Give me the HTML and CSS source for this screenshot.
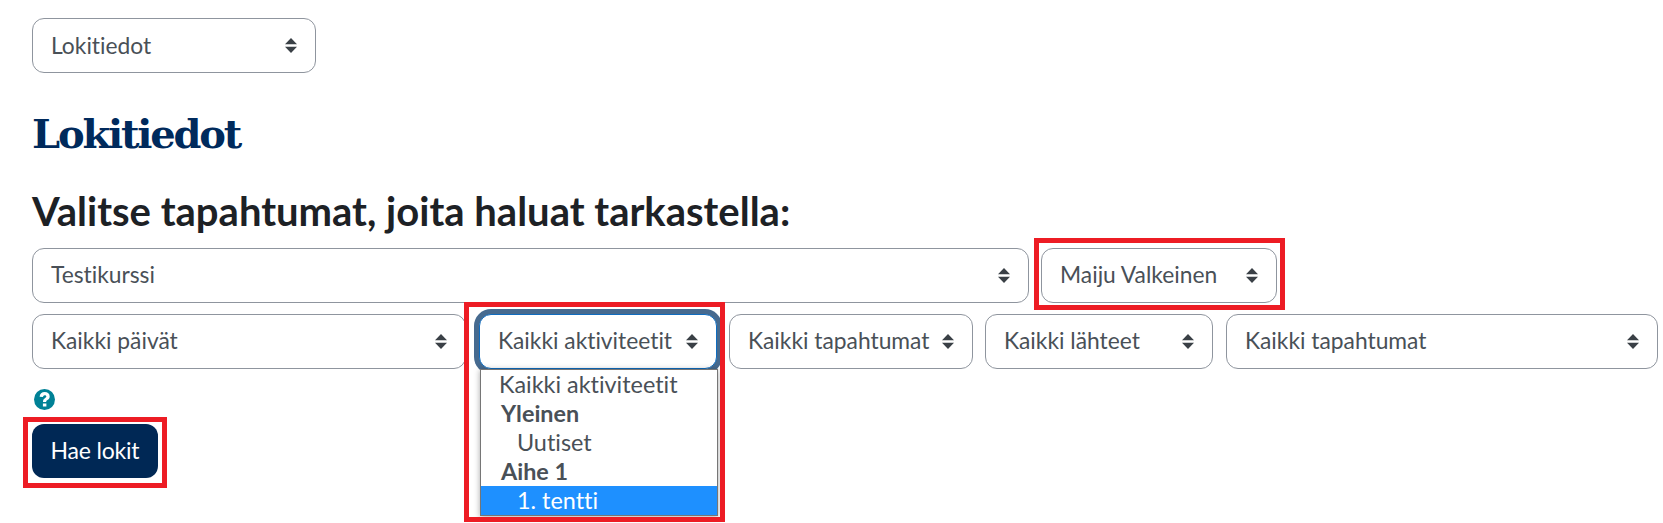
FILE: index.html
```html
<!DOCTYPE html>
<html lang="fi">
<head>
<meta charset="utf-8">
<title>Lokitiedot</title>
<link rel="stylesheet" href="styles.css">
</head>
<body>
<svg class="defs" width="0" height="0" aria-hidden="true"><symbol id="updown" viewBox="0 0 12 15"><path d="M6 0 12 6.3H0Z M0 8.7H12L6 15Z"/></symbol></svg>
<main class="page">
  <div class="sel sel-nav"><span>Lokitiedot</span><svg class="arrows"><use href="#updown"/></svg></div>
  <h2 class="title">Lokitiedot</h2>
  <h3 class="subtitle">Valitse tapahtumat, joita haluat tarkastella:</h3>
  <div class="row row-a">
    <div class="sel w-course"><span>Testikurssi</span><svg class="arrows"><use href="#updown"/></svg></div>
    <div class="sel w-user"><span>Maiju Valkeinen</span><svg class="arrows"><use href="#updown"/></svg><i class="mark mark-user"></i></div>
  </div>
  <div class="row row-b">
    <div class="sel w-date"><span>Kaikki päivät</span><svg class="arrows"><use href="#updown"/></svg></div>
    <div class="sel w-act focused"><span>Kaikki aktiviteetit</span><svg class="arrows"><use href="#updown"/></svg>
      <ul class="menu">
        <li>Kaikki aktiviteetit</li>
        <li class="group">Yleinen</li>
        <li class="child">Uutiset</li>
        <li class="group">Aihe 1</li>
        <li class="child active">1. tentti</li>
      </ul>
      <i class="mark mark-act"></i>
    </div>
    <div class="sel w-event"><span>Kaikki tapahtumat</span><svg class="arrows"><use href="#updown"/></svg></div>
    <div class="sel w-origin"><span>Kaikki lähteet</span><svg class="arrows"><use href="#updown"/></svg></div>
    <div class="sel w-edu"><span>Kaikki tapahtumat</span><svg class="arrows"><use href="#updown"/></svg></div>
  </div>
  <svg class="help" viewBox="0 0 21 21" aria-label="Ohje"><circle cx="10.5" cy="10.5" r="10.5" fill="#008196"/><path d="M5.6 7.8C5.8 4.9 7.8 3.1 10.7 3.1 13.7 3.1 15.7 5 15.7 7.4 15.7 9.3 14.7 10.2 13.4 11.1 12.5 11.7 12.2 12.1 12.2 13.1H9C8.9 11.2 9.5 10.2 10.9 9.2 11.8 8.6 12.3 8.2 12.3 7.6 12.3 6.8 11.6 6.3 10.7 6.3 9.8 6.3 9.2 7 9 8.1Z M8.9 14.4H12.4V17.6H8.9Z" fill="#fff"/></svg>
  <div class="btn">Hae lokit<i class="mark mark-btn"></i></div>
</main>
</body>
</html>
```
FILE: styles.css
```css
* { box-sizing: border-box; }
html, body { margin: 0; padding: 0; background: #fff; }
body { font-family: Lato, "Liberation Sans", sans-serif; font-variant-ligatures: none; overflow: hidden; height: 523px; }
.defs { position: absolute; }
.page { padding: 18px 5px 0 32px; }

.sel {
  position: relative;
  display: flex;
  align-items: center;
  justify-content: space-between;
  height: 55px;
  padding: 0 18px;
  border: 1px solid #8f959e;
  border-radius: 12px;
  background: #fff;
  color: #495057;
  font-size: 22.8px;
  white-space: nowrap;
}
.sel > span { margin-bottom: 3px; }
.sel-nav > span { margin-bottom: 2px; }
.arrows { width: 12px; height: 15px; fill: #3a4046; flex: none; }
.sel-nav { width: 284px; }

.title {
  margin: 38px 0 0;
  font: bold 40px/46px "DejaVu Serif", serif;
  color: #002a5c;
  letter-spacing: -2.2px;
}
.subtitle {
  margin: 32px 0 0;
  font: bold 40px/44px Lato, sans-serif;
  color: #1d2125;
}

.row { display: flex; gap: 12px; }
.row-a { margin-top: 15px; }
.row-b { margin-top: 11px; }
.w-course { width: 997px; }
.w-user { width: 236px; }
.w-date { width: 434px; }
.w-act { width: 238px; margin-left: 1px; }
.w-event { width: 244px; }
.w-origin { width: 228px; }
.w-edu { width: 432px; margin-left: 1px; }

.focused {
  border-color: #0f6cbf;
  box-shadow: 0 0 0 5px #466a8f;
}

.menu {
  position: absolute;
  z-index: 2;
  top: 54px;
  left: 0;
  width: 238px;
  height: 147px;
  margin: 0;
  padding: 0;
  list-style: none;
  background: #fff;
  border: 1px solid #767676;
  box-shadow: 0 1px 6px rgba(0, 0, 0, .35);
  font-size: 23.4px;
  color: #495057;
}
.menu li { height: 29px; line-height: 28px; padding-left: 18px; }
.menu .group { font-weight: bold; padding-left: 20px; }
.menu .child { padding-left: 36px; }
.menu .active { background: #1e90ff; color: #fff; }

.help { display: block; width: 21px; height: 21px; margin: 20px 0 0 2px; }

.btn {
  position: relative;
  display: flex;
  align-items: center;
  justify-content: center;
  width: 126px;
  height: 54px;
  margin-top: 14px;
  padding-bottom: 2px;
  border-radius: 12px;
  background: #002855;
  color: #fff;
  font-size: 23px;
  letter-spacing: -.2px;
}

.mark { position: absolute; z-index: 3; border: 5px solid #ed1c24; pointer-events: none; }
.mark-user { inset: -11px -9px -8px -8px; }
.mark-act { inset: -13px -9px -154px -16px; }
.mark-btn { inset: -7px -9px -10px -9px; }
```
